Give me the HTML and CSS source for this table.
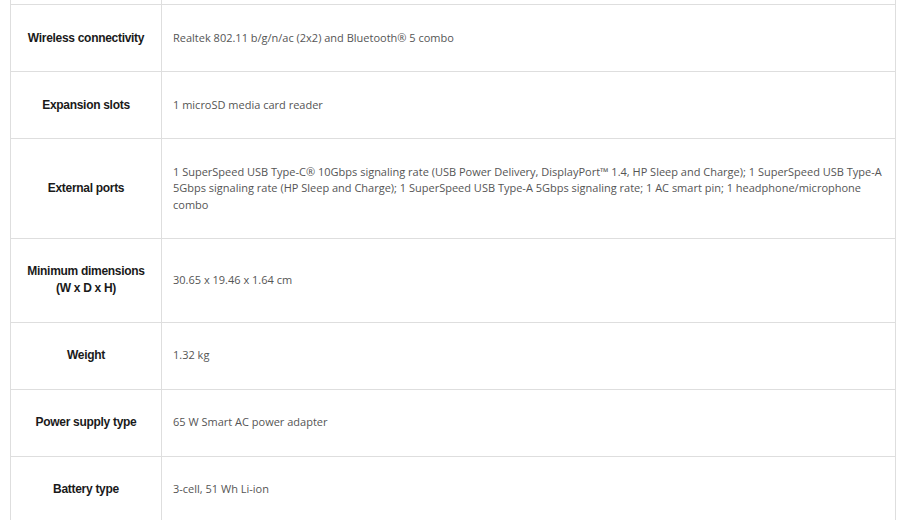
FILE: index.html
```html
<!DOCTYPE html>
<html lang="en">
<head>
<meta charset="utf-8">
<title>Specifications</title>
<link rel="stylesheet" href="styles.css">
</head>
<body>
<div class="specs">
  <table class="spec-table">
    <tbody>
      <tr class="prev">
        <th></th>
        <td></td>
      </tr>
      <tr>
        <th>Wireless connectivity</th>
        <td>Realtek 802.11 b/g/n/ac (2x2) and Bluetooth® 5 combo</td>
      </tr>
      <tr>
        <th>Expansion slots</th>
        <td>1 microSD media card reader</td>
      </tr>
      <tr>
        <th>External ports</th>
        <td>1 SuperSpeed USB Type-C® 10Gbps signaling rate (USB Power Delivery, DisplayPort™ 1.4, HP Sleep and Charge); 1 SuperSpeed USB Type-A 5Gbps signaling rate (HP Sleep and Charge); 1 SuperSpeed USB Type-A 5Gbps signaling rate; 1 AC smart pin; 1 headphone/microphone combo</td>
      </tr>
      <tr>
        <th>Minimum dimensions<br>(W x D x H)</th>
        <td>30.65 x 19.46 x 1.64 cm</td>
      </tr>
      <tr>
        <th>Weight</th>
        <td>1.32 kg</td>
      </tr>
      <tr>
        <th>Power supply type</th>
        <td>65 W Smart AC power adapter</td>
      </tr>
      <tr>
        <th>Battery type</th>
        <td>3-cell, 51 Wh Li-ion</td>
      </tr>
    </tbody>
  </table>
</div>
</body>
</html>
```

FILE: styles.css
```css
html, body {
  margin: 0;
  padding: 0;
  background: #ffffff;
  overflow: hidden;
}

.specs {
  padding: 0 4px 0 10px;
  margin-top: -63px;
}

.spec-table {
  width: 886px;
  border-collapse: collapse;
  table-layout: fixed;
  border: 1px solid #dedede;
}

.spec-table .prev th,
.spec-table .prev td {
  height: 17px;
}

.spec-table th,
.spec-table td {
  border: 1px solid #dedede;
  padding: 24.5px 10px;
  vertical-align: middle;
}

.spec-table th {
  width: 130px;
  text-align: center;
  font-family: "Liberation Sans", Arial, sans-serif;
  font-weight: 700;
  font-size: 12px;
  line-height: 17px;
  color: #1a1a1a;
  letter-spacing: -0.3px;
}

.spec-table td {
  text-align: left;
  padding-left: 11px;
  font-family: "Open Sans", sans-serif;
  font-weight: 400;
  font-size: 11px;
  line-height: 16.5px;
  color: #555555;
}
```
